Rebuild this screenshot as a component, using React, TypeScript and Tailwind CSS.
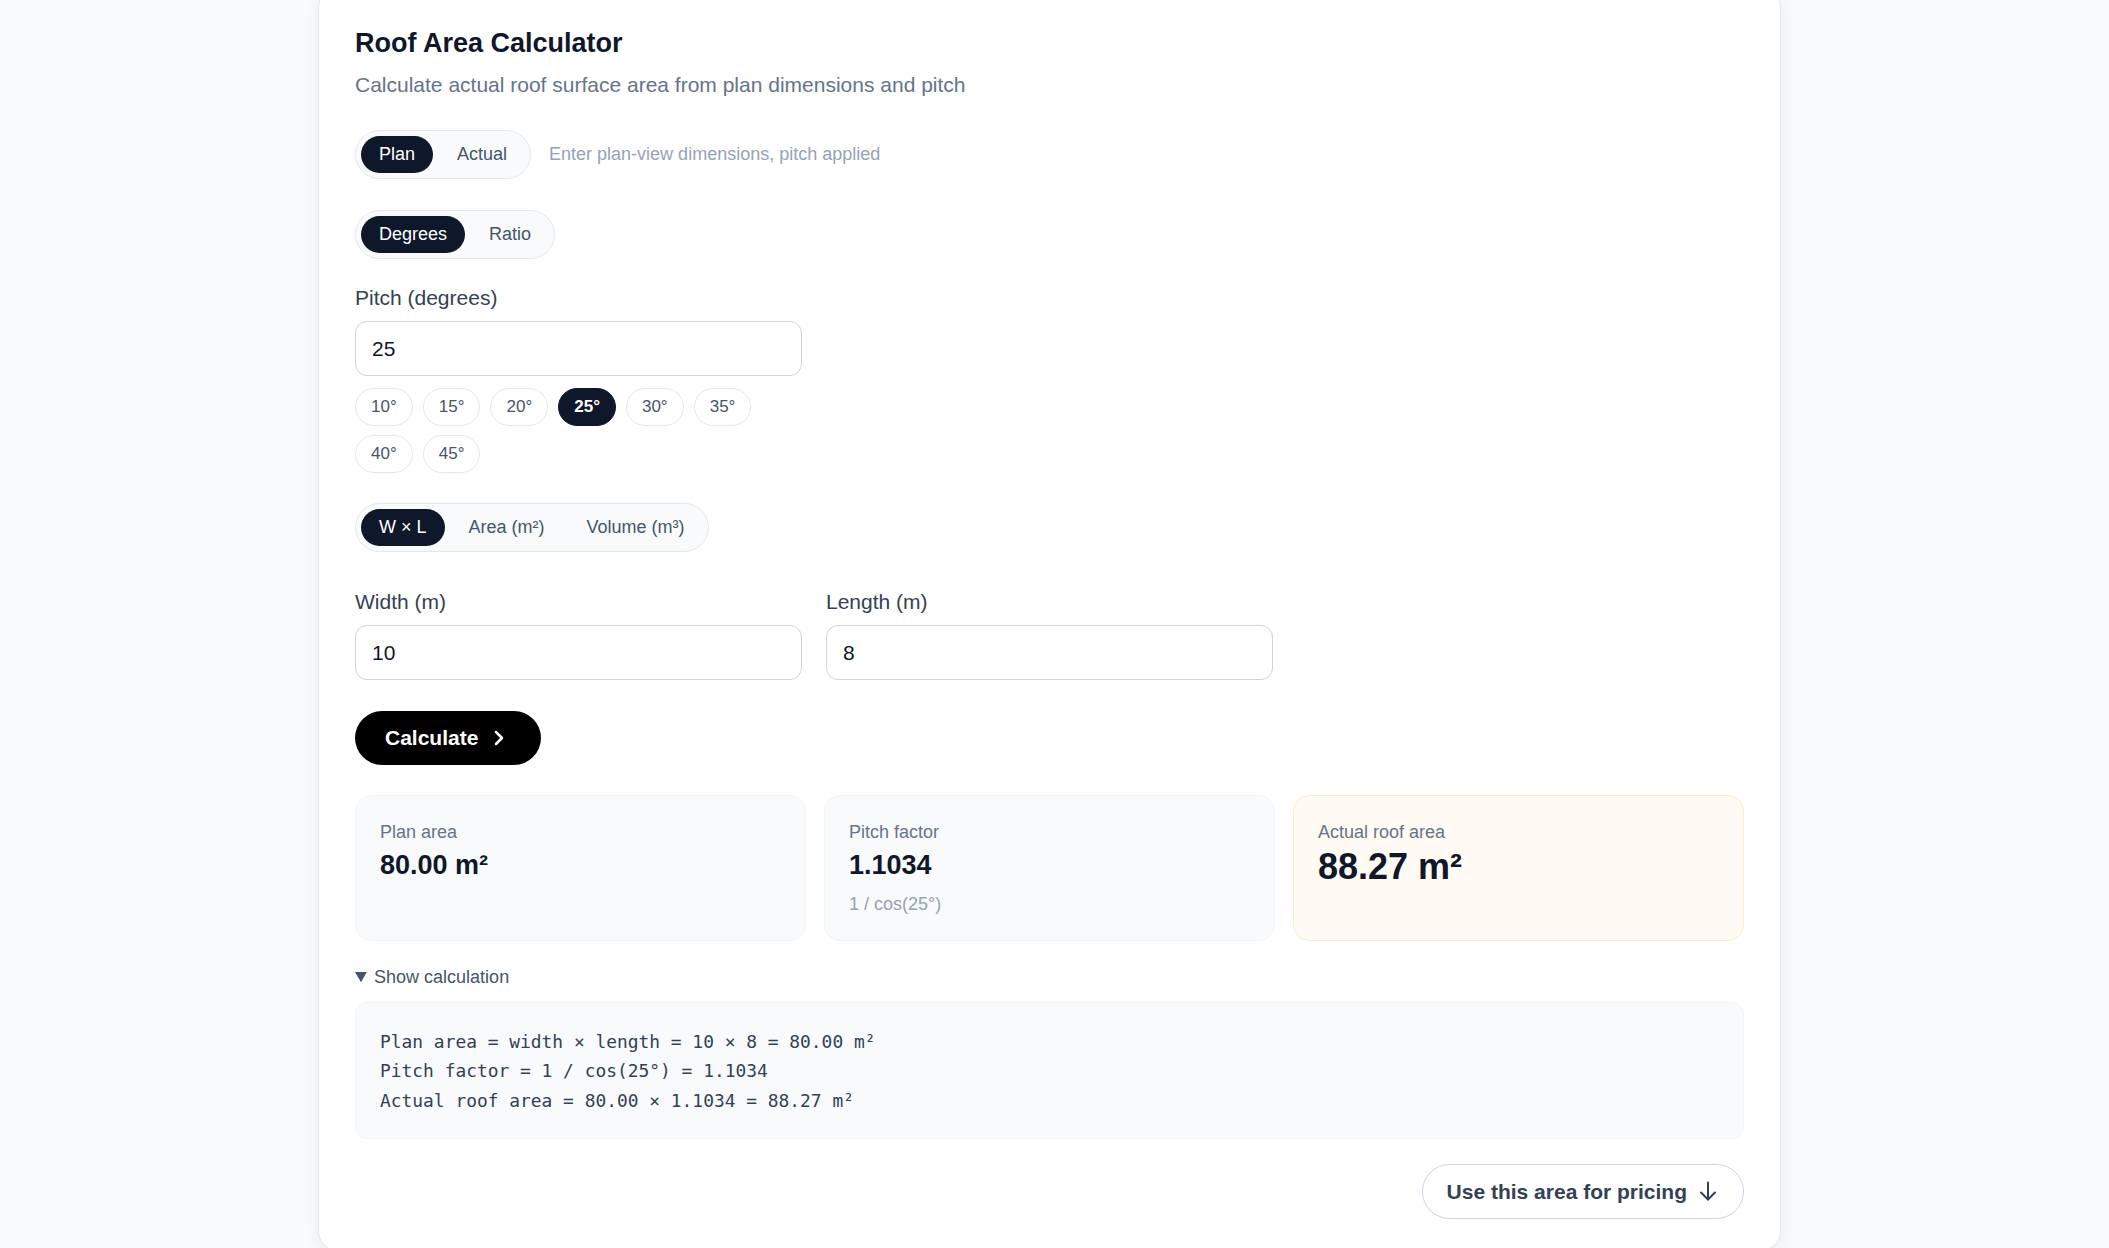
import { ChevronRight } from "lucide-react";

const pitchPresets = [10, 15, 20, 25, 30, 35, 40, 45];

interface SegmentProps {
  options: string[];
  active: number;
}

function Segment({ options, active }: SegmentProps) {
  return (
    <div className="inline-flex w-fit items-center gap-[6px] rounded-full border border-[#e2e8f0] bg-[#f8fafc] p-[5px]">
      {options.map((label, i) => (
        <button
          key={label}
          className={`flex h-[37px] items-center rounded-full px-[18px] text-[18px] ${
            i === active ? "bg-[#0f172a] font-medium text-white" : "text-[#475569]"
          }`}
        >
          {label}
        </button>
      ))}
    </div>
  );
}

function Field({ label, value }: { label: string; value: string }) {
  return (
    <div className="flex flex-col">
      <label className="text-[21px] leading-[30px] text-[#334155]">{label}</label>
      <input
        readOnly
        value={value}
        className="mt-[8px] h-[55px] w-full rounded-xl border border-[#cbd5e1] bg-white px-4 text-[21px] text-[#0f172a] outline-none"
      />
    </div>
  );
}

function ResultCard({
  label,
  value,
  note,
  highlight = false,
}: {
  label: string;
  value: string;
  note?: string;
  highlight?: boolean;
}) {
  return (
    <div
      className={`rounded-[16px] border p-[24px] ${
        highlight ? "border-[#fdebd0] bg-[#fffaf3]" : "border-[#f1f5f9] bg-[#f8fafc]"
      }`}
    >
      <div className="text-[18px] leading-[24px] text-[#64748b]">{label}</div>
      {highlight ? (
        <div className="mt-[3px] text-[36px] font-bold leading-[40px] text-[#0f172a]">{value}</div>
      ) : (
        <div className="mt-[3px] text-[27px] font-bold leading-[36px] text-[#0f172a]">{value}</div>
      )}
      {note && <div className="mt-[9px] text-[18px] leading-[24px] text-[#94a3b8]">{note}</div>}
    </div>
  );
}

export default function App() {
  return (
    <div className="h-[1248px] overflow-hidden bg-[#f8fafc] pl-[318px] font-['Liberation_Sans',Arial,sans-serif]">
      <div className="-mt-[12px] w-[1463px] rounded-[20px] border border-[#e5e7eb] bg-white px-[36px] pb-[31px] pt-[36px] shadow-[0_4px_16px_rgba(15,23,42,0.06)]">
        {/* Header */}
        <h1 className="text-[27px] font-bold leading-[36px] text-[#0f172a]">Roof Area Calculator</h1>
        <p className="mt-[9px] text-[21px] leading-[30px] text-[#64748b]">
          Calculate actual roof surface area from plan dimensions and pitch
        </p>

        {/* Input mode */}
        <div className="mt-[30px] flex items-center gap-[18px]">
          <Segment options={["Plan", "Actual"]} active={0} />
          <span className="text-[18px] text-[#94a3b8]">Enter plan-view dimensions, pitch applied</span>
        </div>

        {/* Pitch unit */}
        <div className="mt-[31px]">
          <Segment options={["Degrees", "Ratio"]} active={0} />
        </div>

        {/* Pitch */}
        <div className="mt-[24px] grid grid-cols-3 gap-6">
          <div>
            <Field label="Pitch (degrees)" value="25" />
            <div className="mt-[12px] flex flex-wrap gap-x-[10px] gap-y-[9px]">
              {pitchPresets.map((p) => (
                <button
                  key={p}
                  className={`flex h-[38px] items-center rounded-full border px-[15px] text-[17px] ${
                    p === 25
                      ? "border-[#0f172a] bg-[#0f172a] font-semibold text-white"
                      : "border-[#e2e8f0] bg-white text-[#475569]"
                  }`}
                >
                  {p}°
                </button>
              ))}
            </div>
          </div>
        </div>

        {/* Dimension mode */}
        <div className="mt-[30px]">
          <Segment options={["W × L", "Area (m²)", "Volume (m³)"]} active={0} />
        </div>

        <div className="mt-[35px] grid grid-cols-3 gap-6">
          <Field label="Width (m)" value="10" />
          <Field label="Length (m)" value="8" />
        </div>

        <button className="mt-[31px] flex h-[54px] items-center gap-[9px] rounded-full bg-black px-[30px] text-[21px] font-bold text-white">
          Calculate
          <ChevronRight size={24} strokeWidth={2.5} />
        </button>

        {/* Results */}
        <div className="mt-[30px] grid grid-cols-3 gap-[18px]">
          <ResultCard label="Plan area" value="80.00 m²" />
          <ResultCard label="Pitch factor" value="1.1034" note="1 / cos(25°)" />
          <ResultCard label="Actual roof area" value="88.27 m²" highlight />
        </div>

        <details open className="mt-[23px]">
          <summary className="cursor-pointer text-[18px] leading-[27px] text-[#475569]">Show calculation</summary>
          <div className="mt-[11px] rounded-[12px] border border-[#f1f5f9] bg-[#f8fafc] px-[24px] pb-[23px] pt-[24px] font-['DejaVu_Sans_Mono',monospace] text-[17.9px] leading-[29.25px] text-[#334155]">
            <div className="whitespace-pre">Plan area = width × length = 10 × 8 = 80.00 m²</div>
            <div className="whitespace-pre">Pitch factor = 1 / cos(25°) = 1.1034</div>
            <div className="whitespace-pre">Actual roof area = 80.00 × 1.1034 = 88.27 m²</div>
          </div>
        </details>

        <div className="mt-[25px] flex justify-end">
          <button className="flex h-[55px] items-center gap-[12px] rounded-full border border-[#cbd5e1] bg-white pl-[24px] pr-[26px] text-[21px] font-bold text-[#334155]">
            Use this area for pricing
            <svg width="18" height="20" viewBox="0 0 18 20" fill="none" stroke="currentColor" strokeWidth="2" strokeLinecap="round" strokeLinejoin="round">
              <path d="M9 1.5v17" />
              <path d="M2 11.5l7 7 7-7" />
            </svg>
          </button>
        </div>
      </div>
    </div>
  );
}
